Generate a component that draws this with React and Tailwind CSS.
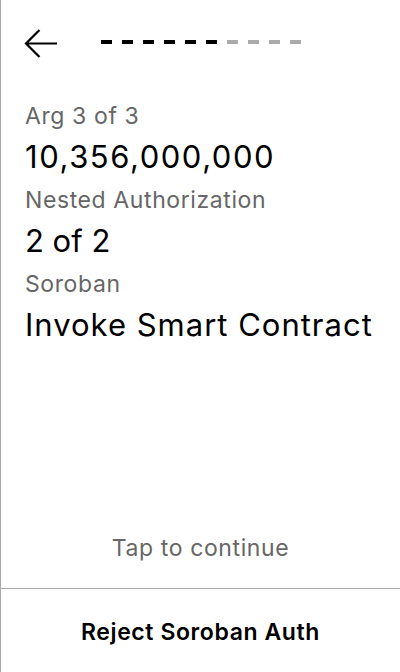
export default function App() {
  const dashes = [1, 1, 1, 1, 1, 1, 0, 0, 0, 0];
  return (
    <div
      className="w-[400px] h-[672px] bg-white border-l border-[#aaaaaa] flex flex-col overflow-hidden"
      style={{ fontFamily: "Inter, 'Noto Sans', sans-serif" }}
    >
      <div className="h-[88px] flex items-center pl-[23px] shrink-0">
        <svg width="34" height="30" viewBox="0 0 34 30" className="shrink-0">
          <path d="M33 14.5 H2 M15.5 1 L2 14.5 L15.5 28" fill="none" stroke="#000" strokeWidth="2.2" />
        </svg>
        <div className="flex gap-[10px] ml-[43px] -mt-[4px]">
          {dashes.map((d, i) => (
            <div key={i} className={`w-[11px] h-[4px] ${d ? "bg-black" : "bg-[#aaaaaa]"}`} />
          ))}
        </div>
      </div>
      <div className="flex flex-col pl-[24px] pt-[14px]">
        <div className="text-[23px] leading-[28px] tracking-[0.6px] text-[#666666]">Arg 3 of 3</div>
        <div className="text-[31px] leading-[40px] tracking-[1.55px] text-black mt-[7px] mb-[9px]">10,356,000,000</div>
        <div className="text-[23px] leading-[28px] tracking-[0.6px] text-[#666666]">Nested Authorization</div>
        <div className="text-[31px] leading-[40px] tracking-[0px] text-black mt-[7px] mb-[9px]">2 of 2</div>
        <div className="text-[23px] leading-[28px] tracking-[0.6px] text-[#666666]">Soroban</div>
        <div className="text-[31px] leading-[40px] tracking-[1px] text-black mt-[7px] mb-[9px]">Invoke Smart Contract</div>
      </div>
      <div className="flex-1" />
      <div className="text-center text-[23px] leading-[28px] tracking-[0.6px] text-[#666666] mb-[26px]">Tap to continue</div>
      <div className="border-t border-[#aaaaaa] h-[84px] flex items-center justify-center pt-[3px]">
        <span className="text-[23px] font-semibold tracking-[0.6px] text-black">Reject Soroban Auth</span>
      </div>
    </div>
  );
}
